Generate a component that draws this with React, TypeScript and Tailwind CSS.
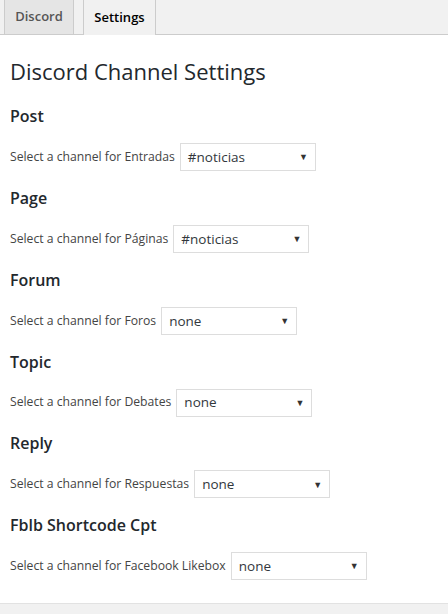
const sections = [
  { title: 'Post', label: 'Entradas', value: '#noticias' },
  { title: 'Page', label: 'Páginas', value: '#noticias' },
  { title: 'Forum', label: 'Foros', value: 'none' },
  { title: 'Topic', label: 'Debates', value: 'none' },
  { title: 'Reply', label: 'Respuestas', value: 'none' },
  { title: 'Fblb Shortcode Cpt', label: 'Facebook Likebox', value: 'none' },
];

export default function App() {
  return (
    <div className="flex h-[614px] w-[448px] flex-col overflow-hidden bg-white font-['Open_Sans',sans-serif] text-[#444]">
      <nav className="flex h-[35px] shrink-0 items-end gap-[9px] border-b border-[#ccc] bg-[#f1f1f1] pl-[4px]">
        <span className="-mb-px flex h-[35px] w-[70px] items-center justify-center border border-t-0 border-[#ccc] bg-[#e5e5e5] text-[13px] font-semibold text-[#555]">
          Discord
        </span>
        <span className="-mb-px flex h-[35px] w-[73px] items-center justify-center border border-t-0 border-b-0 border-[#ccc] bg-[#f1f1f1] text-[13px] font-semibold text-black">
          Settings
        </span>
      </nav>

      <main className="flex-1 px-[10px] pt-[22px]">
        <h1 className="pb-[3.4px] text-[22px] leading-[29px] font-normal text-[#23282d]">Discord Channel Settings</h1>
        {sections.map((s) => (
          <section key={s.title} className="mt-[15.8px]">
            <h2 className="text-[16px] leading-[22px] font-semibold text-[#23282d]">{s.title}</h2>
            <div className="mt-[16px] flex items-center gap-[5px] text-[12.2px]">
              <span>Select a channel for {s.label}</span>
              <div className="flex h-[28px] w-[136px] items-center justify-between border border-[#ddd] bg-white pr-[7px] pl-[7px] text-[13.5px] text-[#32373c]">
                <span>{s.value}</span>
                <span className="text-[9px] text-[#333]">▼</span>
              </div>
            </div>
          </section>
        ))}
      </main>

      <div className="h-[11px] shrink-0 border-t border-[#e2e2e2] bg-[#f1f1f1]" />
    </div>
  );
}
